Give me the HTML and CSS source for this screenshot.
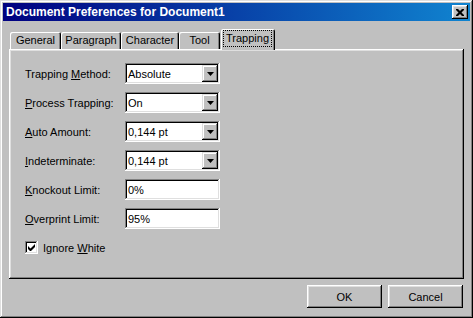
FILE: index.html
```html
<!DOCTYPE html>
<html lang="en">
<head>
    <meta charset="UTF-8">
    <title>Document Preferences for Document1</title>
    <link rel="stylesheet" href="styles.css">
</head>
<body>

    <div class="window">
        <div class="titlebar">
            <span class="title">Document Preferences for Document1</span>
            <button class="close-btn">
                <svg width="8" height="7" viewBox="0 0 8 7">
                    <path d="M0 0h2l2 2 2-2h2v1l-2.5 2.5L8 6v1H6L4 5 2 7H0V6l2.5-2.5L0 1z" fill="#000"/>
                </svg>
            </button>
        </div>

        <div class="dialog-body">
            <div class="tabs">
                <div class="tab tab-general">General</div>
                <div class="tab tab-paragraph">Paragraph</div>
                <div class="tab tab-character">Character</div>
                <div class="tab tab-tool">Tool</div>
                <div class="tab active"><span class="focus">Trapping</span></div>
            </div>

            <div class="panel">
                <div class="form">
                    <div class="row">
                        <span class="label">Trapping <u>M</u>ethod:</span>
                        <div class="field combo">
                            <span class="value">Absolute</span>
                            <span class="drop"><svg width="7" height="4" viewBox="0 0 7 4"><path d="M0 0h7L3.5 4z" fill="#000"/></svg></span>
                        </div>
                    </div>
                    <div class="row">
                        <span class="label"><u>P</u>rocess Trapping:</span>
                        <div class="field combo">
                            <span class="value">On</span>
                            <span class="drop"><svg width="7" height="4" viewBox="0 0 7 4"><path d="M0 0h7L3.5 4z" fill="#000"/></svg></span>
                        </div>
                    </div>
                    <div class="row">
                        <span class="label"><u>A</u>uto Amount:</span>
                        <div class="field combo">
                            <span class="value">0,144 pt</span>
                            <span class="drop"><svg width="7" height="4" viewBox="0 0 7 4"><path d="M0 0h7L3.5 4z" fill="#000"/></svg></span>
                        </div>
                    </div>
                    <div class="row">
                        <span class="label"><u>I</u>ndeterminate:</span>
                        <div class="field combo">
                            <span class="value">0,144 pt</span>
                            <span class="drop"><svg width="7" height="4" viewBox="0 0 7 4"><path d="M0 0h7L3.5 4z" fill="#000"/></svg></span>
                        </div>
                    </div>
                    <div class="row">
                        <span class="label"><u>K</u>nockout Limit:</span>
                        <div class="field">
                            <span class="value">0%</span>
                        </div>
                    </div>
                    <div class="row">
                        <span class="label"><u>O</u>verprint Limit:</span>
                        <div class="field">
                            <span class="value">95%</span>
                        </div>
                    </div>
                </div>

                <div class="check-row">
                    <span class="checkbox">
                        <svg width="7" height="7" viewBox="0 0 7 7"><path d="M0 2v3l2 2h1l4-4V0L2.5 4.5z" fill="#000"/></svg>
                    </span>
                    <span>Ignore <u>W</u>hite</span>
                </div>
            </div>

            <div class="buttons">
                <button class="btn">OK</button>
                <button class="btn">Cancel</button>
            </div>
        </div>
    </div>

</body>
</html>
```

FILE: styles.css
```css
body {
    margin: 0;
    padding: 0;
    background-color: #c0c0c0;
    font-family: 'Liberation Sans', Arial, sans-serif;
    font-size: 11px;
    color: #000;
}

.window {
    width: 473px;
    height: 318px;
    box-sizing: border-box;
    padding: 3px;
    background-color: #c0c0c0;
    box-shadow: inset -1px -1px #000, inset 1px 1px #dfdfdf,
                inset -2px -2px #808080, inset 2px 2px #fff;
}

.titlebar {
    height: 18px;
    display: flex;
    align-items: center;
    padding: 0 2px 0 3px;
    background: linear-gradient(to right, #000080, #1084d0);
}

.title {
    color: #fff;
    font-weight: bold;
    font-size: 12px;
    flex: 1;
}

.close-btn {
    width: 16px;
    height: 14px;
    padding: 0;
    border: none;
    background-color: #c0c0c0;
    display: flex;
    align-items: center;
    justify-content: center;
    box-shadow: inset -1px -1px #000, inset 1px 1px #fff,
                inset -2px -2px #808080, inset 2px 2px #dfdfdf;
}

.dialog-body {
    padding: 8px 6px 0 6px;
}

.tabs {
    display: flex;
    align-items: flex-end;
    height: 20px;
    padding-left: 1px;
}

.tab {
    height: 17px;
    line-height: 17px;
    box-sizing: border-box;
    text-align: center;
    border-top-left-radius: 2px;
    border-top-right-radius: 2px;
    box-shadow: inset 1px 1px #fff, inset -1px 0 #000, inset -2px 0 #808080;
}

.tab-general { width: 51px; }
.tab-paragraph { width: 60px; }
.tab-character { width: 58px; }
.tab-tool { width: 41px; }

.tab.active {
    position: relative;
    z-index: 1;
    height: 21px;
    line-height: 19px;
    margin: 0 -2px -1px 1px;
    padding: 0 4px 0 3px;
    background-color: #c0c0c0;
    box-shadow: inset 1px 1px #fff, inset -1px 0 #000, inset -2px 0 #808080;
}

.focus {
    display: inline-block;
    line-height: 15px;
    padding: 0 2px;
    outline: 1px dotted #000;
}

.panel {
    height: 230px;
    box-sizing: border-box;
    padding: 14px 16px;
    box-shadow: inset -1px -1px #000, inset 1px 1px #fff,
                inset -2px -2px #808080, inset 2px 2px #dfdfdf;
}

.form {
    display: flex;
    flex-direction: column;
    gap: 8px;
}

.row {
    display: flex;
    align-items: center;
    height: 21px;
}

.label {
    width: 100px;
}

.field {
    width: 95px;
    height: 21px;
    box-sizing: border-box;
    display: flex;
    align-items: center;
    padding-left: 3px;
    background-color: #fff;
    box-shadow: inset -1px -1px #fff, inset 1px 1px #808080,
                inset -2px -2px #dfdfdf, inset 2px 2px #000;
}

.value {
    flex: 1;
}

.drop {
    width: 16px;
    height: 17px;
    margin-right: 2px;
    display: flex;
    align-items: center;
    justify-content: center;
    background-color: #c0c0c0;
    box-shadow: inset -1px -1px #000, inset 1px 1px #dfdfdf,
                inset -2px -2px #808080, inset 2px 2px #fff;
}

.check-row {
    display: flex;
    align-items: center;
    gap: 5px;
    margin-top: 12px;
}

.checkbox {
    width: 13px;
    height: 13px;
    box-sizing: border-box;
    display: flex;
    align-items: center;
    justify-content: center;
    background-color: #fff;
    box-shadow: inset -1px -1px #fff, inset 1px 1px #808080,
                inset -2px -2px #dfdfdf, inset 2px 2px #000;
}

.buttons {
    display: flex;
    justify-content: flex-end;
    gap: 6px;
    margin-top: 6px;
    padding-right: 1px;
}

.btn {
    width: 75px;
    height: 23px;
    padding: 0;
    border: none;
    font-family: 'Liberation Sans', Arial, sans-serif;
    font-size: 11px;
    color: #000;
    background-color: #c0c0c0;
    box-shadow: inset -1px -1px #000, inset 1px 1px #fff,
                inset -2px -2px #808080, inset 2px 2px #dfdfdf;
}
```
